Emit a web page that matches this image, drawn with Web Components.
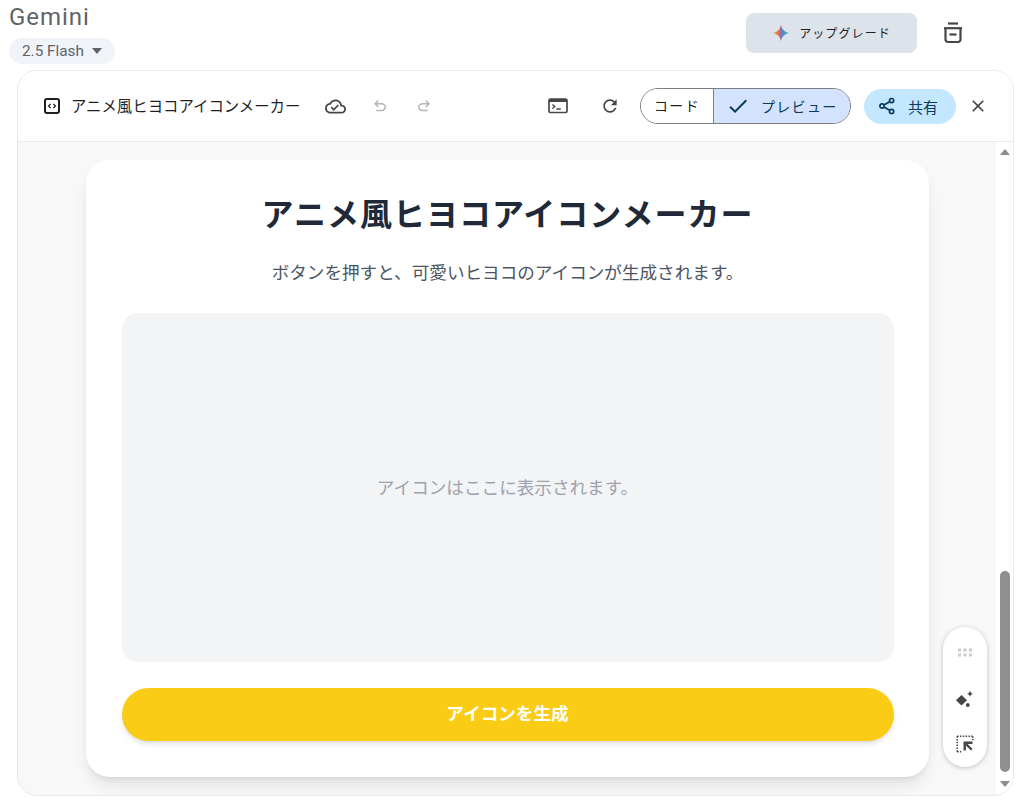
<!DOCTYPE html>
<html lang="ja">
<head>
<meta charset="utf-8">
<title>Gemini</title>
<style>
  html, body { margin: 0; height: 802px; overflow: hidden; background: #fff; }
  body { font-family: Roboto, "Noto Sans CJK JP", sans-serif; }
</style>
</head>
<body>
<gem-app>
  <gem-topbar slot="top"></gem-topbar>
  <canvas-panel slot="panel">
    <panel-toolbar slot="toolbar" title-text="アニメ風ヒヨコアイコンメーカー"></panel-toolbar>
    <maker-card title-text="アニメ風ヒヨコアイコンメーカー"
      sub-text="ボタンを押すと、可愛いヒヨコのアイコンが生成されます。"
      empty-text="アイコンはここに表示されます。"
      action-text="アイコンを生成"></maker-card>
    <float-pill slot="overlay"></float-pill>
    <scroll-rail slot="rail"></scroll-rail>
  </canvas-panel>
</gem-app>

<script>
const ICONS = {
  code: `<svg viewBox="0 0 18 18" width="18" height="18"><rect x="2" y="2" width="14" height="14" rx="2" fill="none" stroke="#1f1f1f" stroke-width="2"/><path d="M7.600 6.900 5.600 9l2 2.100M10.400 6.900l2 2.100-2 2.100" fill="none" stroke="#1f1f1f" stroke-width="1.300"/></svg>`,
  cloud: `<svg viewBox="0 0 24 24" width="21" height="21" fill="#444746"><path d="M19.350 10.040C18.670 6.590 15.640 4 12 4 9.110 4 6.600 5.640 5.350 8.040 2.340 8.360 0 10.910 0 14c0 3.310 2.690 6 6 6h13c2.760 0 5-2.240 5-5 0-2.640-2.050-4.780-4.650-4.960zM19 18H6c-2.210 0-4-1.790-4-4 0-2.050 1.530-3.760 3.560-3.970l1.070-.11.5-.95C8.080 7.140 9.940 6 12 6c2.620 0 4.880 1.860 5.390 4.430l.3 1.500 1.530.11c1.560.1 2.780 1.410 2.780 2.960 0 1.650-1.350 3-3 3zm-9-3.820l-2.090-2.090L6.500 13.500 10 17l6.010-6.010-1.410-1.410z"/></svg>`,
  undo: `<svg viewBox="0 0 24 24" width="18" height="18" fill="#b4b6b8"><path d="M7 19v-2h7.100q1.575 0 2.737-1T18 13.500 16.838 11 14.100 10H7.800l2.600 2.600L9 14 4 9l5-5 1.400 1.400L7.800 8h6.300q2.425 0 4.163 1.575T20 13.500t-1.737 3.925T14.100 19H7z"/></svg>`,
  redo: `<svg viewBox="0 0 24 24" width="18" height="18" fill="#b4b6b8"><path transform="matrix(-1 0 0 1 24 0)" d="M7 19v-2h7.100q1.575 0 2.737-1T18 13.500 16.838 11 14.100 10H7.800l2.600 2.600L9 14 4 9l5-5 1.400 1.400L7.800 8h6.300q2.425 0 4.163 1.575T20 13.500t-1.737 3.925T14.100 19H7z"/></svg>`,
  terminal: `<svg viewBox="0 0 20 16" width="20" height="16"><rect x="1" y="1" width="18" height="13.500" rx="1.400" fill="#fff" stroke="#444746" stroke-width="1.700"/><rect x="1" y="1" width="18" height="3" fill="#444746"/><path d="M4.400 6.400 6.800 8.400 4.400 10.400" fill="none" stroke="#444746" stroke-width="1.300"/><path d="M8.400 11h4.400" stroke="#444746" stroke-width="1.300"/></svg>`,
  refresh: `<svg viewBox="0 0 24 24" width="20" height="20" fill="#444746"><path d="M17.650 6.350C16.200 4.900 14.210 4 12 4c-4.420 0-7.990 3.580-7.990 8s3.570 8 7.990 8c3.730 0 6.840-2.550 7.730-6h-2.080c-.82 2.330-3.040 4-5.650 4-3.310 0-6-2.690-6-6s2.690-6 6-6c1.660 0 3.140.69 4.220 1.780L13 11h7V4l-2.350 2.350z"/></svg>`,
  check: `<svg viewBox="0 0 24 24" width="24" height="24" fill="#0b3a5c"><path d="M9 16.170L4.830 12l-1.420 1.410L9 19 21 7l-1.410-1.410z"/></svg>`,
  share: `<svg viewBox="0 0 18 18" width="18" height="18" fill="none" stroke="#0b3a5c" stroke-width="1.700"><circle cx="13.600" cy="3.600" r="2.100"/><circle cx="4" cy="9" r="2.100"/><circle cx="13.600" cy="14.400" r="2.100"/><path d="M5.900 7.900 11.700 4.700M5.900 10.100l5.800 3.200"/></svg>`,
  close: `<svg viewBox="0 0 24 24" width="20" height="20" fill="#444746"><path d="M19 6.410L17.590 5 12 10.590 6.410 5 5 6.410 10.590 12 5 17.590 6.410 19 12 13.410 17.590 19 19 17.590 13.410 12z"/></svg>`,
  stack: `<svg viewBox="0 0 22 24" width="22" height="24" fill="none" stroke="#444746" stroke-width="2.200"><path d="M6 2.500h10"/><path d="M2 7.200h18"/><path d="M3.500 7.200v11.300a2.500 2.500 0 0 0 2.500 2.500h10a2.500 2.500 0 0 0 2.500-2.500V7.200"/><path d="M7.500 13.500h7"/></svg>`,
  spark: `<svg viewBox="0 0 18 18" width="18" height="18"><defs><linearGradient id="a" x1="0" y1="0" x2="1" y2="0"><stop offset="0" stop-color="#f6a53c"/><stop offset=".42" stop-color="#e8604c"/><stop offset=".55" stop-color="#4285f4"/><stop offset="1" stop-color="#5bb974"/></linearGradient></defs><path d="M9 .5C9.700 5.400 12.600 8.300 17.500 9 12.600 9.700 9.700 12.600 9 17.500 8.300 12.600 5.400 9.700.5 9 5.400 8.300 8.300 5.400 9 .5z" fill="url(#a)"/></svg>`,
  grip: `<svg viewBox="0 0 16 10" width="16" height="10" fill="#c9cbce"><rect x="1" y="0.500" width="3" height="3"/><rect x="6.500" y="0.500" width="3" height="3"/><rect x="12" y="0.500" width="3" height="3"/><rect x="1" y="5.500" width="3" height="3"/><rect x="6.500" y="5.500" width="3" height="3"/><rect x="12" y="5.500" width="3" height="3"/></svg>`,
  sparkles: `<svg viewBox="0 0 20 20" width="20" height="20" fill="#444746"><path d="M6.500 6 12 11.200 6.500 16.500 1 11.200z"/><path d="M15 1.500c.4 2 1.300 2.900 3.200 3.300-1.900.4-2.800 1.300-3.200 3.300-.4-2-1.300-2.900-3.200-3.300 1.900-.4 2.800-1.300 3.200-3.300z"/><circle cx="12.800" cy="16" r="1.900"/></svg>`,
  select: `<svg viewBox="0 0 18 18" width="18" height="18"><path d="M1.200 1.200h15.600M1.200 1.200v15.600M1.200 16.800h4M16.800 1.200v4" fill="none" stroke="#444746" stroke-width="1.500" stroke-dasharray="1.500 1.300"/><path d="M7.500 6.500h9v2.400h-4.900l5 5-1.700 1.700-5-5v4.900H7.500z" fill="#444746"/></svg>`,
};

function shadow(host, html) {
  host.attachShadow({ mode: "open" }).innerHTML = html;
}

customElements.define("gem-app", class extends HTMLElement {
  constructor() {
    super();
    shadow(this, `<style>
      :host { display: flex; flex-direction: column; height: 802px; box-sizing: border-box; padding: 0 10px 6px 17px; }
    </style><slot name="top"></slot><slot name="panel"></slot>`);
  }
});

customElements.define("gem-topbar", class extends HTMLElement {
  constructor() {
    super();
    shadow(this, `<style>
      :host { display: flex; justify-content: space-between; height: 70px; margin-left: -8px; flex: none; }
      .brand { display: flex; flex-direction: column; align-items: flex-start; }
      .name { font: 400 24px/28px Roboto, sans-serif; color: #5f6368; margin-top: 3px; letter-spacing: .95px; }
      .chip { display: flex; align-items: center; gap: 8px; height: 26px; margin-top: 7px; padding: 0 13px 0 13px;
        border-radius: 13px; background: #f0f4f9; font: 400 15.300px/26px Roboto, sans-serif; color: #5f6368; }
      .caret { width: 0; height: 0; border: 5.500px solid transparent; border-top: 6px solid #5f6368; border-bottom: 0; }
      .right { display: flex; align-items: flex-start; padding-top: 13px; padding-right: 50px; }
      .upgrade { display: flex; align-items: center; justify-content: center; gap: 9px; width: 171px; height: 40px; border-radius: 8px;
        background: #dde3ea; font: 400 12px/40px "Noto Sans CJK JP", sans-serif; color: #1f1f1f; letter-spacing: 1.100px; }
      .stack { display: flex; margin-left: 25px; margin-top: 8px; }
    </style>
    <div class="brand"><div class="name">Gemini</div><div class="chip">2.5 Flash<span class="caret"></span></div></div>
    <div class="right"><div class="upgrade">${ICONS.spark}<span>アップグレード</span></div><div class="stack">${ICONS.stack}</div></div>`);
  }
});

customElements.define("canvas-panel", class extends HTMLElement {
  constructor() {
    super();
    shadow(this, `<style>
      :host { display: grid; grid-template-rows: 71px 1fr; grid-template-columns: 1fr 17px; flex: 1; min-height: 0; position: relative;
        border: 1px solid #e8eaed; border-radius: 20px; overflow: hidden; background: #f8f8f9; box-sizing: border-box; }
      .tb { grid-column: 1 / 3; background: #fff; border-bottom: 1px solid #e8eaed; }
      .body { padding-top: 18px; display: flex; justify-content: center; min-height: 0; }
      .rail { background: #fff; }
    </style>
    <div class="tb"><slot name="toolbar"></slot></div>
    <div class="body"><slot></slot></div>
    <div class="rail"><slot name="rail"></slot></div>
    <slot name="overlay"></slot>`);
  }
});

customElements.define("panel-toolbar", class extends HTMLElement {
  constructor() {
    super();
    const title = this.getAttribute("title-text");
    shadow(this, `<style>
      :host { display: flex; align-items: center; height: 70px; padding: 0 25px 0 25px; box-sizing: border-box; }
      .ic { display: flex; align-items: center; justify-content: center; }
      .title { font: 400 15.400px/20px "Noto Sans CJK JP", sans-serif; color: #1f1f1f; margin-left: 10px; white-space: nowrap; margin-top: -2px; }
      .spacer { flex: 1; }
      .seg { display: flex; height: 36px; margin-left: 20px; border: 1px solid #7c7f83; border-radius: 18px; overflow: hidden; box-sizing: border-box; width: 211px;
        font: 400 14px/33px "Noto Sans CJK JP", sans-serif; color: #1f1f1f; letter-spacing: 1.300px; }
      .seg .code { width: 72px; text-align: center; border-right: 1px solid #7c7f83; background: #fff; }
      .seg .prev { flex: 1; display: flex; align-items: center; gap: 11px; padding-left: 12px; background: #d3e3fd; color: #0b3a5c; }
      .share { display: flex; align-items: center; gap: 12px; height: 35px; width: 92px; box-sizing: border-box; padding-left: 14px; margin-left: 13px; border-radius: 18px;
        background: #c2e7ff; font: 400 15px/35px "Noto Sans CJK JP", sans-serif; color: #0b3a5c; }
      .close { margin-left: 12px; }
    </style>
    <span class="ic">${ICONS.code}</span>
    <span class="title">${title}</span>
    <span class="ic" style="margin-left:25px">${ICONS.cloud}</span>
    <span class="ic" style="margin-left:25px">${ICONS.undo}</span>
    <span class="ic" style="margin-left:26px">${ICONS.redo}</span>
    <span class="spacer"></span>
    <span class="ic">${ICONS.terminal}</span>
    <span class="ic" style="margin-left:32px">${ICONS.refresh}</span>
    <div class="seg"><div class="code">コード</div><div class="prev">${ICONS.check}<span>プレビュー</span></div></div>
    <div class="share">${ICONS.share}<span>共有</span></div>
    <span class="ic close">${ICONS.close}</span>`);
  }
});

customElements.define("maker-card", class extends HTMLElement {
  constructor() {
    super();
    const a = n => this.getAttribute(n);
    shadow(this, `<style>
      :host { display: flex; flex-direction: column; box-sizing: border-box; width: 843px; height: 617px; padding: 34px 35px 36px 36px;
        background: #fff; border-radius: 24px; font-family: "Noto Sans CJK JP", sans-serif; text-align: center;
        box-shadow: 0 10px 15px -3px rgba(0,0,0,.1), 0 4px 6px -4px rgba(0,0,0,.1); }
      h1 { margin: 0; font-size: 32px; line-height: 36px; font-weight: 700; color: #1f2937; letter-spacing: 1px; }
      p { margin: 28px 0 27px; font-size: 17.600px; line-height: 28px; color: #4b5563; }
      .empty { flex: none; height: 349px; box-sizing: border-box; padding-bottom: 2px; display: flex; align-items: center; justify-content: center; border-radius: 16px;
        background: #f3f4f6; color: #9ca3af; font-size: 17.600px; line-height: 28px; }
      .go { margin-top: 26px; height: 53px; border-radius: 27px; background: #facc15; color: #fff; font-size: 17.600px; font-weight: 700; line-height: 50px;
        box-shadow: 0 4px 6px -1px rgba(0,0,0,.1), 0 2px 4px -2px rgba(0,0,0,.1); }
    </style>
    <h1>${a("title-text")}</h1>
    <p>${a("sub-text")}</p>
    <div class="empty">${a("empty-text")}</div>
    <div class="go">${a("action-text")}</div>`);
  }
});

customElements.define("float-pill", class extends HTMLElement {
  constructor() {
    super();
    shadow(this, `<style>
      :host { position: absolute; left: 925px; top: 556px; width: 44px; height: 140px; border-radius: 22px; background: #fff;
        box-shadow: 0 1px 5px rgba(0,0,0,.22); display: flex; flex-direction: column; align-items: center; }
      .g { margin-top: 21px; display: flex; }
      .s { margin-top: 31px; display: flex; }
      .e { margin-top: 26px; display: flex; }
    </style>
    <div class="g">${ICONS.grip}</div><div class="s">${ICONS.sparkles}</div><div class="e">${ICONS.select}</div>`);
  }
});

customElements.define("scroll-rail", class extends HTMLElement {
  constructor() {
    super();
    shadow(this, `<style>
      :host { display: flex; flex-direction: column; align-items: center; height: 100%; box-sizing: border-box; padding-top: 7px; padding-bottom: 8px; }
      .up, .down { width: 0; height: 0; border: 5px solid transparent; }
      .up { border-bottom: 6px solid #8c8c8c; border-top: 0; }
      .down { border-top: 6px solid #8c8c8c; border-bottom: 0; }
      .track { flex: 1; width: 10px; display: flex; flex-direction: column; justify-content: flex-end; padding-bottom: 9px; }
      .thumb { height: 201px; border-radius: 5px; background: #8f8f8f; }
    </style>
    <div class="up"></div><div class="track"><div class="thumb"></div></div><div class="down"></div>`);
  }
});
</script>
</body>
</html>
